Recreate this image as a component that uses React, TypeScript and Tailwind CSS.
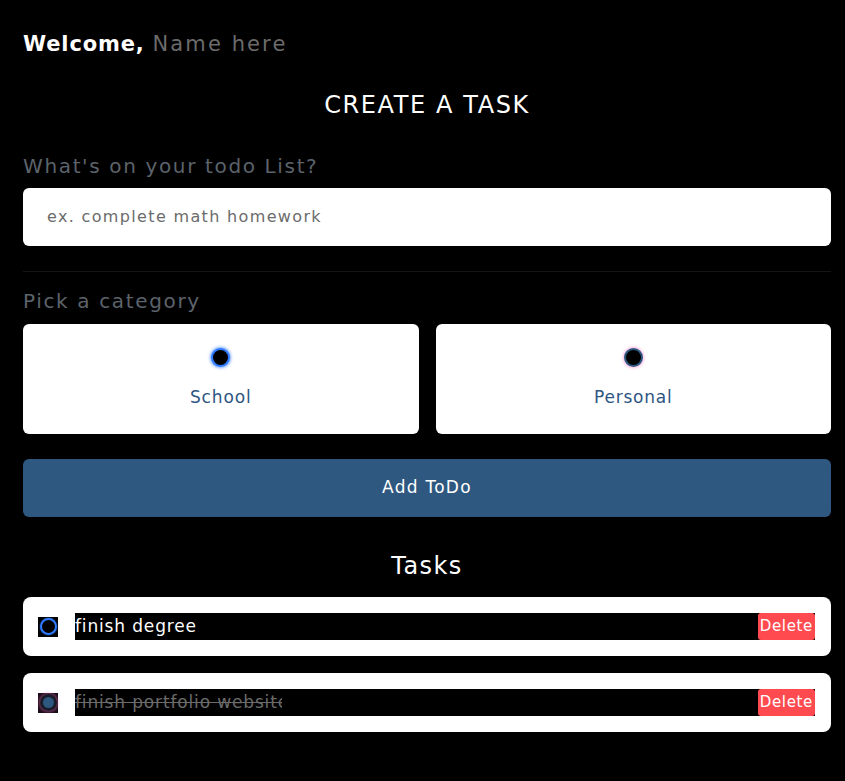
import React from "react";

const font = { fontFamily: '"DejaVu Sans", "Noto Sans", sans-serif' };

export default function App() {
  return (
    <div className="min-h-[781px] w-full bg-black pl-[23px] pr-[14px] pt-[29px] text-white" style={font}>
      <div className="flex items-baseline gap-[8px] text-[21px] leading-[30px]">
        <span className="font-semibold tracking-[0.04em] text-white">Welcome,</span>
        <span className="tracking-[0.1em] text-[#6b6b6b]">Name here</span>
      </div>
      <h1 className="mt-[31px] text-center text-[24px] leading-[30px] font-medium tracking-[0.067em] text-white">CREATE A TASK</h1>
      <div className="mt-[33px] text-[20px] leading-[26px] tracking-[0.082em] text-[#5c636b]">What's on your todo List?</div>
      <div className="mt-[9px] flex h-[58px] items-center rounded-[6px] bg-white pl-[24px] text-[16px] tracking-[0.084em] text-[#6b6b6b]">
        ex. complete math homework
      </div>
      <div className="mt-[25px] h-px bg-[#141414]" />
      <div className="mt-[16px] text-[20px] leading-[26px] tracking-[0.082em] text-[#5c636b]">Pick a category</div>
      <div className="mt-[10px] grid grid-cols-2 gap-[17px]">
        <div className="flex h-[110px] flex-col items-center rounded-[6px] bg-white pt-[24px]">
          <div className="h-[19px] w-[19px] rounded-full border-2 border-[#2f7bff] bg-black shadow-[0_0_3px_1px_rgba(47,123,255,0.7)]" />
          <div className="mt-[19px] text-[17px] leading-[22px] tracking-[0.05em] text-[#2e5582]">School</div>
        </div>
        <div className="flex h-[110px] flex-col items-center rounded-[6px] bg-white pt-[24px]">
          <div className="h-[19px] w-[19px] rounded-full border-2 border-[#2e5880] bg-black shadow-[0_0_3px_1px_rgba(255,120,200,0.55)]" />
          <div className="mt-[19px] text-[17px] leading-[22px] tracking-[0.045em] text-[#2e5582]">Personal</div>
        </div>
      </div>
      <button className="mt-[25px] flex h-[58px] w-full items-center justify-center rounded-[6px] bg-[#2e5880] text-[17px] font-medium tracking-[0.074em] text-white">
        Add ToDo
      </button>
      <h2 className="mt-[34px] text-center text-[24px] leading-[30px] font-medium tracking-[0.058em] text-white">Tasks</h2>
      <div className="mt-[16px] flex flex-col gap-[17px]">
        <div className="flex h-[59px] items-center rounded-[8px] bg-white pl-[15px] pr-[16px]">
          <div className="flex h-[20px] w-[20px] items-center justify-center bg-black">
            <div className="h-[17px] w-[17px] rounded-full border-2 border-[#2f7bff] bg-black shadow-[0_0_2px_0_rgba(47,123,255,0.7)]" />
          </div>
          <div className="ml-[17px] flex h-[27px] flex-1 items-center bg-black">
            <span className="flex-1 text-[17px] tracking-[0.05em] text-white">finish degree</span>
            <span className="flex h-[27px] items-center rounded-[3px] bg-[#ff4a4f] px-[2px] text-[15px] tracking-[0.045em] text-white">Delete</span>
          </div>
        </div>
        <div className="flex h-[59px] items-center rounded-[8px] bg-white pl-[15px] pr-[16px]">
          <div className="flex h-[20px] w-[20px] items-center justify-center bg-[#1a0c1a]">
            <div className="flex h-[17px] w-[17px] items-center justify-center rounded-full bg-[#1b1b2a] shadow-[0_0_3px_1px_rgba(255,120,200,0.5)]">
              <div className="h-[11px] w-[11px] rounded-full bg-[#2e5880]" />
            </div>
          </div>
          <div className="ml-[17px] flex h-[27px] flex-1 items-center bg-black">
            <div className="flex-1">
              <div className="w-[207px] overflow-hidden whitespace-nowrap text-[17px] tracking-[0.05em] text-[#6b6b6b] line-through">finish portfolio website</div>
            </div>
            <span className="flex h-[27px] items-center rounded-[3px] bg-[#ff4a4f] px-[2px] text-[15px] tracking-[0.045em] text-white">Delete</span>
          </div>
        </div>
      </div>
    </div>
  );
}
